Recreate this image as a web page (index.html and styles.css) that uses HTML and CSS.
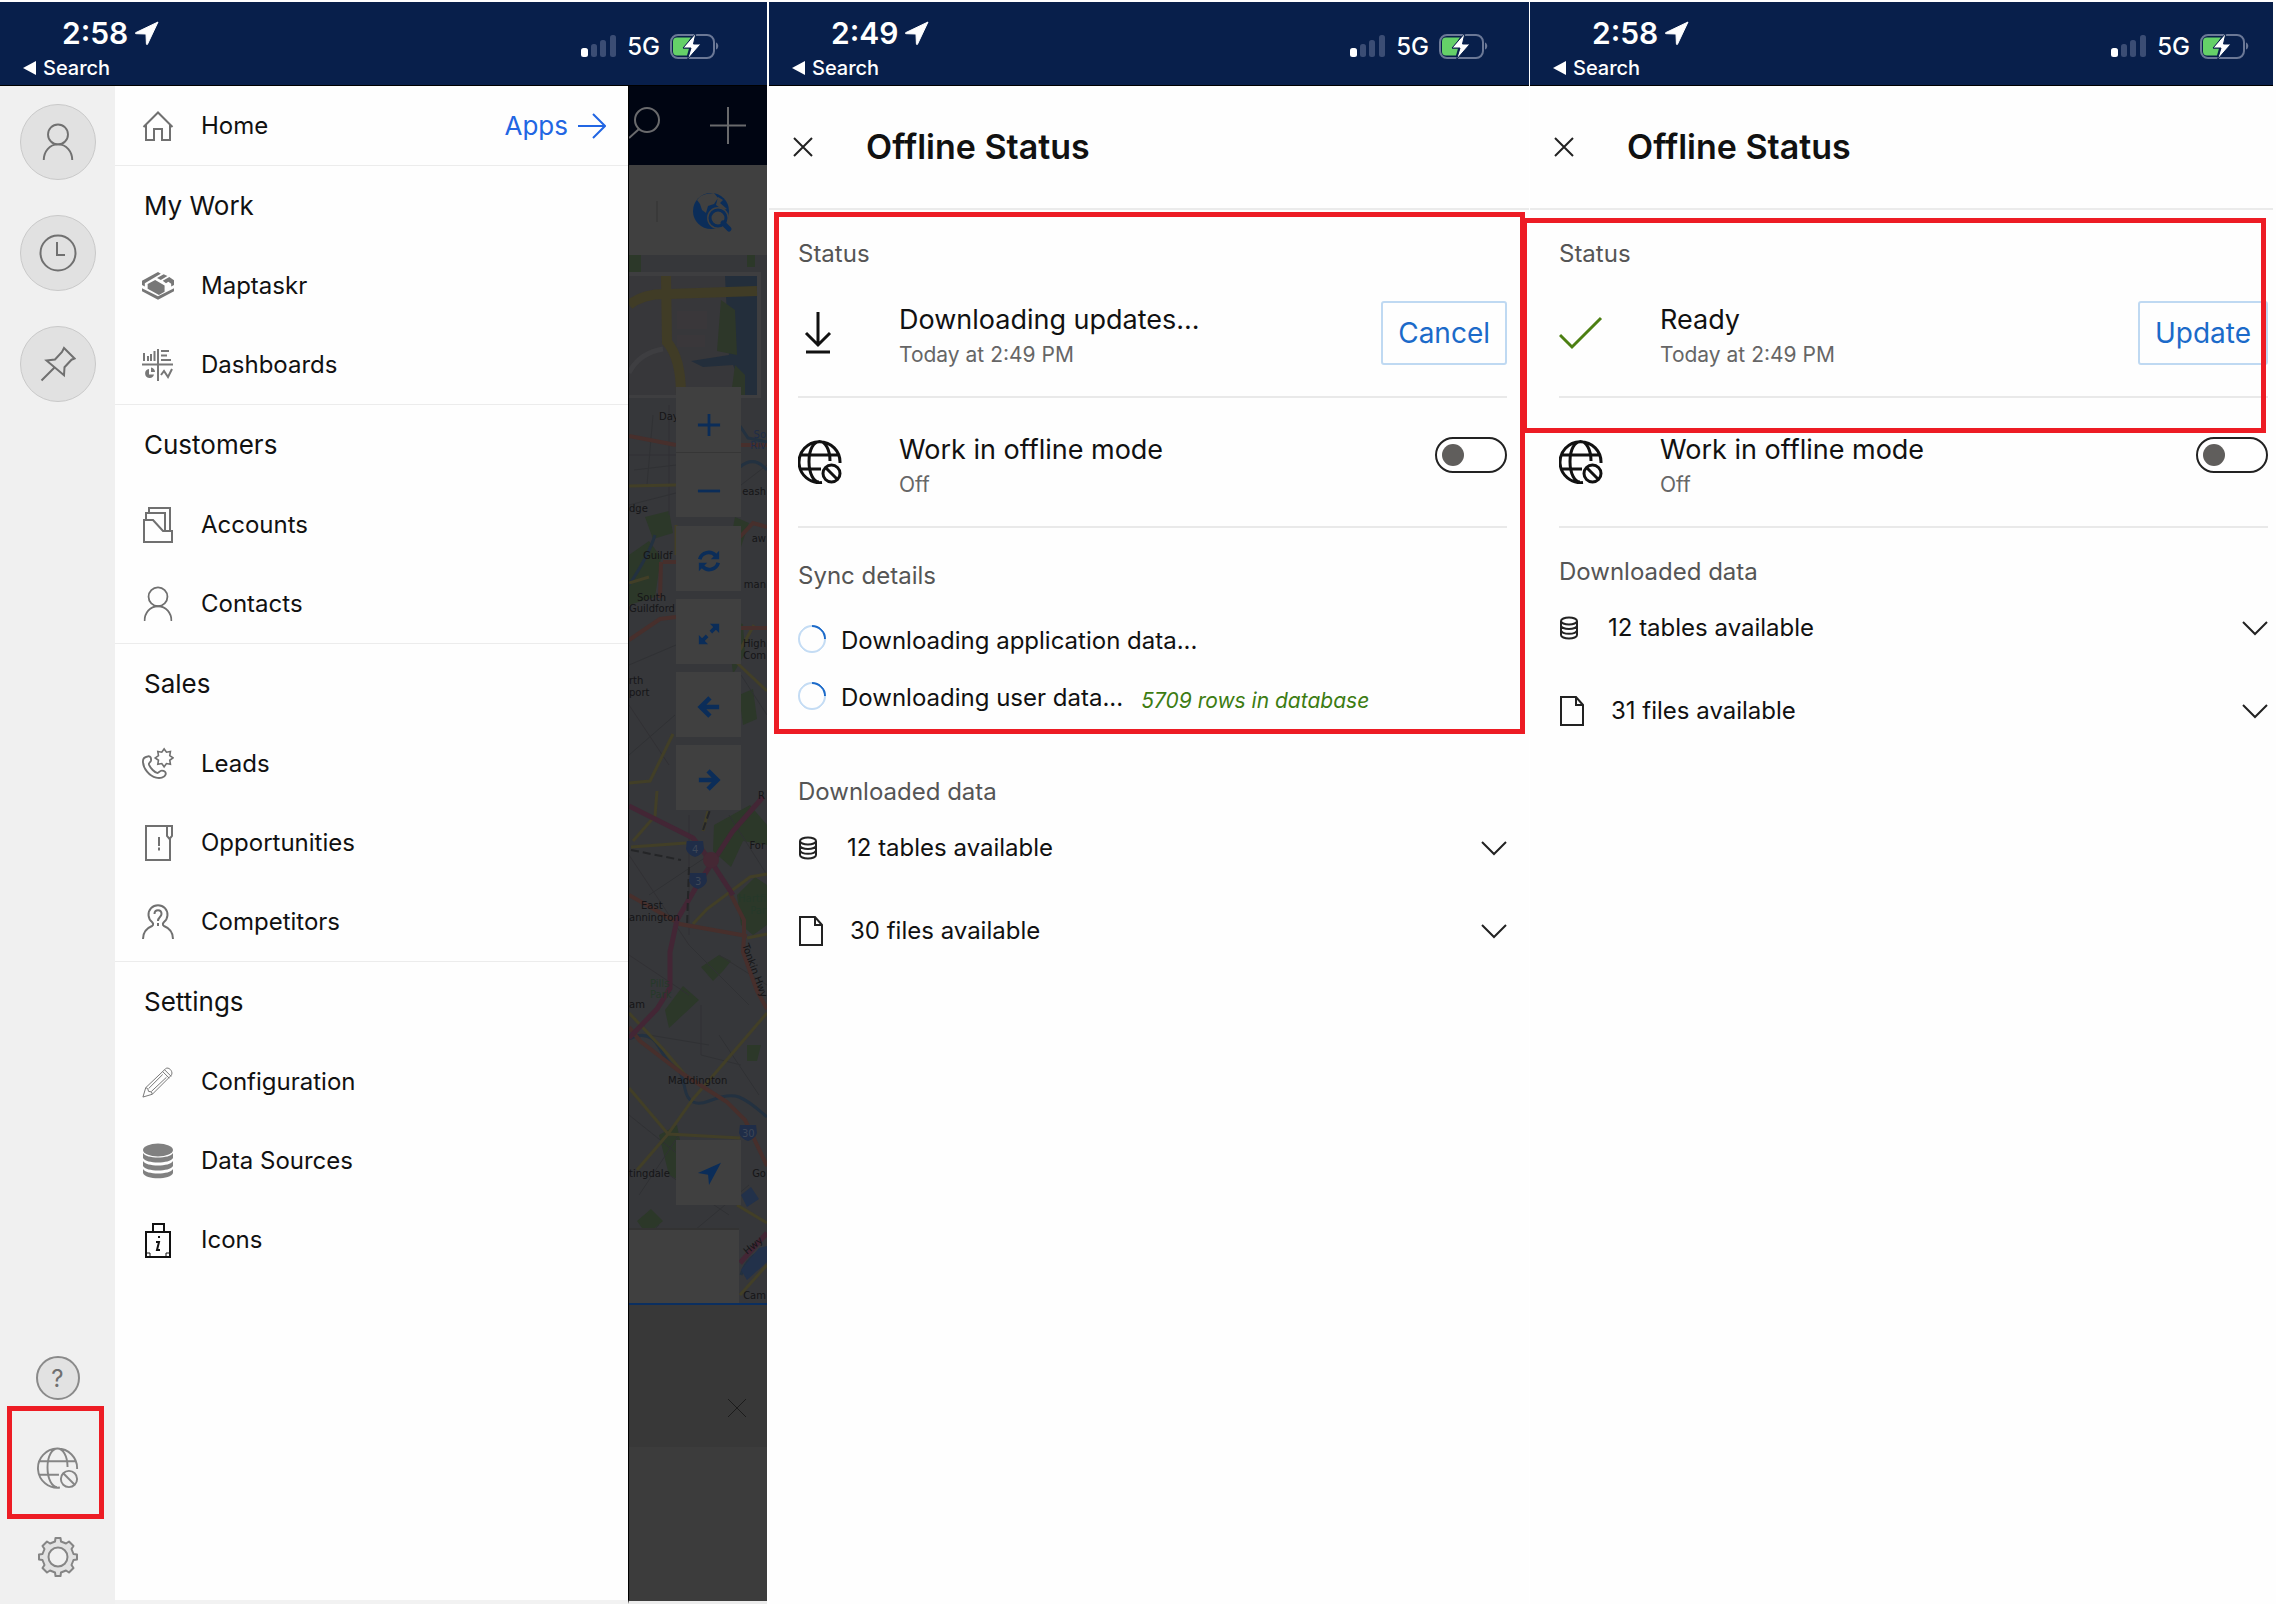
FILE: index.html
```html
<!DOCTYPE html>
<html lang="en">
<head>
<meta charset="utf-8">
<title>Offline Status</title>
<link rel="stylesheet" href="styles.css">
</head>
<body>
<svg class="defs" aria-hidden="true">
  <symbol id="i-nav" viewBox="0 0 24 24"><path d="M23 1 1 11.500a.6.6 0 0 0 .2 1.200L11 13l.4 9.800a.6.6 0 0 0 1.200.2Z" fill="currentColor" stroke="currentColor" stroke-width="1" stroke-linejoin="round"/></symbol>
  <symbol id="i-signal" viewBox="0 0 36 24"><rect x="0" y="14" width="7" height="9" rx="2.500" fill="#fff"/><g fill="#3b4d74"><rect x="10" y="10" width="6" height="13" rx="2.500"/><rect x="19" y="6" width="6" height="17" rx="2.500"/><rect x="29" y="1" width="6" height="22" rx="2.500"/></g></symbol>
  <symbol id="i-battery" viewBox="0 0 50 28"><rect x="1" y="3" width="43" height="23" rx="7" fill="none" stroke="#6b7896" stroke-width="2"/><path d="M46 10.500c3 1 3 6 0 7Z" fill="#6b7896"/><path d="M7 5.500h14l-8 11h6l-2 7H7a4 4 0 0 1-4-4v-10a4 4 0 0 1 4-4Z" fill="#65d168"/><path d="M26 1 13 16h8l-3.500 11.500L31 12h-7.500Z" fill="#fff" stroke="#081f4b" stroke-width="1"/></symbol>
  <symbol id="i-person" viewBox="0 0 32 40"><circle cx="16" cy="12" r="10.500"/><path d="M1 39c0-9 6-16.500 15-16.500S31 30 31 39"/></symbol>
  <symbol id="i-globe" viewBox="0 0 44 44"><path d="M42 23A20.500 20.500 0 1 0 24 42.500M3 15h38M3 29h20M32 21C32 9 27 1.500 21.500 1.500S11 9 11 21.500 16 42 21 42"/><circle cx="33.500" cy="33.500" r="8.500"/><path d="m27.500 27.500 12 12"/></symbol>
  <symbol id="i-close" viewBox="0 0 20 20"><path d="m1 1 18 18M19 1 1 19"/></symbol>
  <symbol id="i-chevron" viewBox="0 0 26 16"><path d="m1 2 12 12L25 2"/></symbol>
  <symbol id="i-db" viewBox="0 0 20 24"><ellipse cx="10" cy="5" rx="8" ry="3.500"/><path d="M2 5v14c0 2 3.500 3.500 8 3.500s8-1.500 8-3.500V5M2 9.500C2 11.500 5.500 13 10 13s8-1.500 8-3.500M2 14.300c0 2 3.500 3.500 8 3.500s8-1.500 8-3.500"/></symbol>
  <symbol id="i-file" viewBox="0 0 26 30"><path d="M2 1h15l7 8v20H2ZM17 1v8h7"/></symbol>
</svg>

<main class="board">
  <section class="phone phone-menu">
    <header class="statusbar">
      <div class="statusbar-left">
        <div class="clock">2:58 <svg class="nav-arrow"><use href="#i-nav"/></svg></div>
        <a class="back" href="#"><span class="triangle"></span>Search</a>
      </div>
      <div class="statusbar-right"><svg class="signal"><use href="#i-signal"/></svg>5G<svg class="battery"><use href="#i-battery"/></svg></div>
    </header>
    <div class="menu-screen">
      <aside class="rail">
        <button class="rail-round" aria-label="Profile"><svg width="32" height="38" class="line"><use href="#i-person"/></svg></button>
        <button class="rail-round" aria-label="Recent"><svg width="38" height="38" viewBox="0 0 38 38" class="line"><circle cx="19" cy="19" r="17.500"/><path d="M18 8v13h8"/></svg></button>
        <button class="rail-round" aria-label="Pinned"><svg width="36" height="36" viewBox="0 0 36 36" class="line"><path d="m24 2 10.500 10.500-3 1.200-7 7.500-.5 8L6.500 14.500l8.500-1 7-7.500ZM14.500 21.500 1.500 34.500"/></svg></button>
        <div class="rail-bottom">
          <button class="help" aria-label="Help">?</button>
          <div class="rail-marked"><button class="rail-plain" aria-label="Offline status"><svg width="42" height="42" class="line"><use href="#i-globe"/></svg></button></div>
          <button class="rail-plain" aria-label="Settings"><svg width="42" height="42" viewBox="0 0 42 42" class="line"><path fill="#e2e2e2" d="M18 5.500 18.500 2h5l.5 3.500 5 2L32 5.500 36.500 10l-2 3 2 5 3.500.500v5l-3.500.500-2 5 2 3L32 36.500l-3-2-5 2-.5 3.500h-5l-.5-3.500-5-2-3 2L5.500 32l2-3-2-5L2 23.500v-5l3.500-.500 2-5-2-3L10 5.500l3 2Z" stroke-linejoin="round"/><circle cx="21" cy="21" r="9.500" fill="#f0f0f0"/></svg></button>
        </div>
      </aside>

      <nav class="menu">
        <div class="menu-top">
          <a class="item" href="#"><svg class="line" viewBox="0 0 32 32"><path d="M1.500 17 16 2.500 30.500 17M4 15v15h8V19h8v11h8V15"/></svg>Home</a>
          <a class="apps" href="#">Apps<svg width="28" height="26" viewBox="0 0 28 26"><path d="M0 13h26M15 1l12 12-12 12" fill="none" stroke="currentColor" stroke-width="2"/></svg></a>
        </div>
        <section class="group">
          <h2>My Work</h2>
          <a class="item" href="#"><svg viewBox="0 0 34 30" fill="#777"><path d="M17 0 0 9.500V14l3 1.500V12L20 2ZM6 13l8-4.500 10 6V21l-6 3.500L6 18ZM16 6.500 23 2.500l4 1.800-7 4.200ZM22 9.500l7-4 5 3.500v5l-3 1.500v-3l-3-2-2.500 1.500ZM0 17.500 17 26l17-8.500v3L17 29.500 0 20.500Z"/></svg>Maptaskr</a>
          <a class="item" href="#"><svg viewBox="0 0 32 32" fill="none" stroke="#777" stroke-width="2"><path d="M0 15.500h31M16 0v32M2 4v8M6 7v5M9 5v7M12.500 2v10M19 2h8M19 6.500h6M19 11h10M19 26l3-4 4 6 4-8"/><path d="M7 20a4.500 4.500 0 1 0 5 5.500H7Z" fill="#777" stroke="none"/><path d="M9 18.500a5 5 0 0 1 4 4.500H9Z" fill="#777" stroke="none"/></svg>Dashboards</a>
        </section>
        <section class="group">
          <h2>Customers</h2>
          <a class="item" href="#"><svg class="line" viewBox="0 0 32 36"><path d="M2 13h9l10 11h9v11H2ZM4 13V6h19v18M7 6V1h21v23"/></svg>Accounts</a>
          <a class="item" href="#"><svg class="line" viewBox="0 0 32 40"><use href="#i-person"/></svg>Contacts</a>
        </section>
        <section class="group">
          <h2>Sales</h2>
          <a class="item" href="#"><svg class="line" viewBox="0 0 34 34"><path d="M6 9c3-1 4 2 3.500 4.500-.5 2-3 2-2 4.500 1.500 3.500 6 8 8.500 8.500 2 .5 2.500-2.500 5-2.500s5 1.500 4 4.500-6 4-10 3C8 30 1 22 1 14c0-2.500 2-4.500 5-5Z"/><path stroke-width="1.700" d="m33 10.500-3.500 2.500.7 4.200-4.200-.7-2.500 3.500-2.500-3.500-4.200.7.7-4.200-3.500-2.500L17.500 8l-.7-4.200 4.200.7L23.500 1 26 4.500l4.200-.7-.7 4.200Z"/></svg>Leads</a>
          <a class="item" href="#"><svg class="line" viewBox="0 0 32 36"><path d="M26 1H4v34h24V14M25 1h5v10l-2.500 3-2.500-3ZM17 12v9M17 22.500v3"/></svg>Opportunities</a>
          <a class="item" href="#"><svg class="line" viewBox="0 0 32 36"><path d="M1 35c0-7 4-11 9-13 2-1 1-3 0-4A9.500 9.500 0 1 1 22 18c-1 1-2 3 0 4 5 2 9 6 9 13M12.500 10c0-5 7-5 7 0 0 3-3.500 3-3.500 7M16 19v3"/></svg>Competitors</a>
        </section>
        <section class="group">
          <h2>Settings</h2>
          <a class="item" href="#"><svg class="line thin" viewBox="0 0 34 34"><path d="M1 33 4 23 25 3c3-3 9 3 6 7L11 30ZM4 23l2 1 1 3 3 .500 1 2.500M22 6l7 7M24 4l7 7M7 24 22 9M10 27 26 12"/></svg>Configuration</a>
          <a class="item" href="#"><svg viewBox="0 0 32 36" fill="#808080"><ellipse cx="16" cy="7" rx="15" ry="6.500"/><path d="M1 10c3 6 27 6 30 0v5c-3 6-27 6-30 0ZM1 18c3 6 27 6 30 0v5c-3 6-27 6-30 0ZM1 26c3 6 27 6 30 0v4c-2 7-28 7-30 0Z"/></svg>Data Sources</a>
          <a class="item" href="#"><svg viewBox="0 0 32 36" fill="none" stroke="#111" stroke-width="2"><path d="M4 10h24v25H4ZM11 10V2h11v8"/><path d="M4 31h4v4M28 31h-4v4" stroke-width="1"/><path d="M14 20h3l-2 8h3M16 15h2" stroke-width="2"/></svg>Icons</a>
        </section>
      </nav>

      <div class="dimmed">
        <div class="dim-header">
          <svg viewBox="0 0 138 79" width="138" height="79" fill="none" stroke="#696a6c" stroke-width="2"><circle cx="18" cy="34" r="12"/><path d="M10 43 0 52M99 21v37M81 39.500h36"/></svg>
        </div>
        <div class="dim-tools">
          <svg viewBox="0 0 138 90" width="138" height="90"><path d="M28 36v21" stroke="#333"/><circle cx="82" cy="46" r="18" fill="#0b2d59"/><path d="M68 35c5-7 12-6 17-7l4 5-4 6-6 2-2 7-4-3-2-6ZM89 32l5 3-3 3 7 6-4 1-7-5Z" fill="#404040"/><circle cx="89" cy="53" r="8" fill="#404040" stroke="#404040" stroke-width="6"/><circle cx="89" cy="53" r="8" fill="none" stroke="#0b2d59" stroke-width="3"/><path d="m94 58 6 6" stroke="#0b2d59" stroke-width="5" stroke-linecap="round"/></svg>
        </div>
        <div class="map">
          <svg class="map-art" viewBox="0 0 138 1048" preserveAspectRatio="xMinYMin slice">
            <rect width="138" height="1048" fill="#36373a"/>
            <g fill="#2c3829"><path d="M0 0h12v17H0ZM118 0h8v12h-8ZM0 300l20-14 12 16-6 40-26 8ZM106 262l14 6-12 36h-10ZM16 262l24-6 4 22-20 6ZM98 365l16 4 2 30-12 20ZM85 570l36-20 17 20v20l-24-4-12 26-18-16ZM108 640l18-18 12 8v40l-14 10-12-10ZM72 712l18-12 12 6-8 10-10 10ZM36 755l18-24 16 14-30 28ZM110 440l14-6 4 30-14 6ZM8 966l14-12 12 12-16 14ZM30 880l18-10 12 60-20-10ZM118 790h14l-4 16h-10Z"/></g>
            <g fill="none" stroke="#303134" stroke-width="1"><path d="M0 200h47M5 215l42-5M24 160l-6 70M0 250l47-12M40 150v110M0 410l47-20M0 450l40 60M0 500l46-40M60 560v120M0 600l60 90M20 640l60-40M60 690l60 60M0 700l60 40M72 750v50l40 10M90 700l48 30M0 860l50 40M10 940l40-60M40 920l60 40M60 980l60-50M90 780l40 60M20 780l60 10M0 1000l30-30M100 560l38 60M112 420l26 40M112 230l26-20"/></g>
            <g fill="none" stroke="#233140" stroke-width="3"><path d="M111 171l8 12 19 4M111 212q14-12 27 3M0 330q20-30 26-50M0 784q20-10 30 8t16 20 10 22 24 12 30-4 28 20M112 1020q6-20 26-26"/></g>
            <path d="M112 1015l18-22 8-2v16l-20 18ZM112 940l10-8 8 12-12 8Z" fill="#22314a"/>
            <g fill="none" stroke="#423f27" stroke-width="3"><path d="M0 231l47-1M47 300V270M0 328l20-6M0 528l21-2 23-47M28 536l-2 25-22 25M74 576l5-20M2 592l55-4M64 669l14-15 43-32 17-3M138 758l-37 43-37 43-25 35-31 36M0 833l39 46 72 4M0 758l34 36 24 28M106 406l32 30M111 395l14-25M108 950l30 18M111 1040l27-30M118 683l20-4"/></g>
            <g fill="none" stroke="#472f2c" stroke-width="4"><path d="M0 181l47 9M111 190h27M111 282l13-14 14 4M0 385l31-21 16-2M32 307l-1 36M34 307h13M112 373h26M0 640l51 29 67 12M101 638l14 27v18l-1 14 14 39 10 18M0 772l11 14 43 33 44 28 18 18 22 46"/></g>
            <g fill="none" stroke="#432635" stroke-width="5"><path d="M0 551l64 32 19 25 21 32M83 608l21-32 30-34M83 608l-14 21-21 36-7 32v36l-13 21-28 29M111 1008l27-30"/></g>
            <circle cx="82" cy="605" r="8" fill="#452834"/>
            <path d="M2 595l50 10M74 575l14-40M60 612l-2 60M86 420v60M94 370v16" stroke="#242527" stroke-width="2" stroke-dasharray="8 4" fill="none"/>
            <g fill="#1f2d48"><path d="M58 586h16l1 8q-2 6-9 8-7-2-9-8ZM61 618h16l1 8q-2 6-9 8-7-2-9-8ZM111 870h16l1 8q-2 6-9 8-7-2-9-8Z"/></g>
            <g class="map-text">
              <text x="30" y="165">Day</text><text x="0" y="257">dge</text><text x="14" y="304">Guildf</text><text x="8" y="346">South</text><text x="0" y="357">Guildford</text>
              <text x="0" y="429">rth</text><text x="0" y="441">port</text>
              <g class="map-text-end"><text x="137" y="392">High</text><text x="137" y="404">Com</text><text x="137" y="240">eash</text><text x="137" y="333">man</text><text x="137" y="287">aw</text><text x="136" y="594">For</text><text x="137" y="922">Go</text><text x="137" y="1044">Cam</text></g>
              <text x="12" y="654">East</text><text x="0" y="666">annington</text><text x="0" y="753">am</text><text x="39" y="829">Maddington</text><text x="0" y="922">tingdale</text>
              <text transform="translate(113 690) rotate(70)">Tonkin Hwy</text><text transform="translate(118 1000) rotate(-40)">Hwy</text><text x="129" y="544">R</text>
              <g class="map-text-end" fill="#26392a"><text x="137" y="647">Hartfi</text><text x="137" y="659">Par</text></g>
              <g fill="#26392a"><text x="21" y="732">Pills</text><text x="21" y="743">Park</text></g>
              <g class="map-text-end" fill="#1f2d48"><text x="137" y="183">So</text><text x="137" y="194">Riv</text></g>
              <g fill="#3d4656"><text x="63" y="598">4</text><text x="66" y="630">3</text><text x="113" y="882">30</text></g>
            </g>
            <path d="M0 17h132v126H0Z" fill="#3e3e40"/>
            <g class="map-inset"><path d="M0 21h128v119H0Z" fill="#37373a"/><path d="M96 21h32v119h-12l-12-30-30 2-12-6 38-6Z" fill="#232e3b"/><path d="M92 45l14 10 2 45-20-4ZM106 110l10 10v20h-14Z" fill="#2d3729"/><path d="M48 56h30v18H48ZM48 80h28v12H48Z" fill="#3a373a"/><path d="M0 118q10-20 34-24" stroke="#3e3e41" stroke-width="5" fill="none"/><path d="M0 50q14-12 40-11l88-3M37 21l1 66q14 16 14 53" stroke="#403c26" stroke-width="10" fill="none"/></g>
          </svg>
          <div class="zoom-controls"><button aria-label="Zoom in"><svg viewBox="0 0 26 26"><path d="M13 1v24M1 13h24" stroke-width="3"/></svg></button><button aria-label="Zoom out"><svg viewBox="0 0 26 26"><path d="M1 13h24" stroke-width="3"/></svg></button></div>
          <div class="map-controls">
            <button aria-label="Refresh"><svg viewBox="0 0 26 26"><path d="M3 11a10 10 0 0 1 17-4M23 15a10 10 0 0 1-17 4" stroke-width="4"/><path d="M24 2v9h-9ZM2 24v-9h9Z" fill="#0b2d59" stroke="none"/></svg></button>
            <button aria-label="Expand"><svg viewBox="0 0 26 26"><path d="m15 11 6-6M11 15l-6 6" stroke-width="4"/><path d="M14 2h10v10ZM2 14v10h10Z" fill="#0b2d59" stroke="none"/></svg></button>
            <button aria-label="Previous"><svg viewBox="0 0 26 26"><path d="M24 13H5M14 3 4 13l10 10" stroke-width="5"/></svg></button>
            <button aria-label="Next"><svg viewBox="0 0 26 26"><path d="M2 13h19M12 3l10 10-10 10" stroke-width="5"/></svg></button>
          </div>
          <button class="locate" aria-label="My location"><svg viewBox="0 0 26 26"><path d="M26 2 1 13l11 2 1 11Z" fill="#0b2d59"/></svg></button>
          <div class="map-card"></div>
        </div>
        <div class="dim-sheet"><button aria-label="Dismiss"><svg width="20" height="20"><use href="#i-close"/></svg></button></div>
        <div class="dim-rest"></div>
      </div>
    </div>
  </section>

  <section class="phone phone-sync">
    <header class="statusbar">
      <div class="statusbar-left">
        <div class="clock">2:49 <svg class="nav-arrow"><use href="#i-nav"/></svg></div>
        <a class="back" href="#"><span class="triangle"></span>Search</a>
      </div>
      <div class="statusbar-right"><svg class="signal"><use href="#i-signal"/></svg>5G<svg class="battery"><use href="#i-battery"/></svg></div>
    </header>
    <div class="titlebar"><button aria-label="Close"><svg width="20" height="20"><use href="#i-close"/></svg></button><h1>Offline Status</h1></div>
    <div class="marked marked-sync">
      <section class="block">
        <h3>Status</h3>
        <div class="row">
          <svg class="row-icon" viewBox="0 0 44 64"><path d="M20 11v33M8 32l12 12 12-12M8 51h24"/></svg>
          <div class="row-text"><p class="row-title">Downloading updates...</p><p class="row-sub">Today at 2:49 PM</p></div>
          <button class="action">Cancel</button>
        </div>
        <div class="row">
          <svg class="row-icon"><use href="#i-globe" width="44" height="44" y="9"/></svg>
          <div class="row-text"><label class="row-title" for="offline-a">Work in offline mode</label><p class="row-sub">Off</p></div>
          <input class="switch" type="checkbox" role="switch" id="offline-a">
        </div>
      </section>
      <section class="block sync">
        <h3>Sync details</h3>
        <p class="sync-row"><span class="spinner"></span>Downloading application data...</p>
        <p class="sync-row"><span class="spinner"></span>Downloading user data... <em>5709 rows in database</em></p>
      </section>
    </div>
    <section class="block downloaded">
      <h3>Downloaded data</h3>
      <button class="expander"><svg class="db" width="20" height="24"><use href="#i-db"/></svg>12 tables available<svg class="chevron"><use href="#i-chevron"/></svg></button>
      <button class="expander"><svg class="file" width="26" height="30"><use href="#i-file"/></svg>30 files available<svg class="chevron"><use href="#i-chevron"/></svg></button>
    </section>
  </section>

  <section class="phone phone-ready">
    <header class="statusbar">
      <div class="statusbar-left">
        <div class="clock">2:58 <svg class="nav-arrow"><use href="#i-nav"/></svg></div>
        <a class="back" href="#"><span class="triangle"></span>Search</a>
      </div>
      <div class="statusbar-right"><svg class="signal"><use href="#i-signal"/></svg>5G<svg class="battery"><use href="#i-battery"/></svg></div>
    </header>
    <div class="titlebar"><button aria-label="Close"><svg width="20" height="20"><use href="#i-close"/></svg></button><h1>Offline Status</h1></div>
    <div class="marked marked-ready">
      <section class="block">
        <h3>Status</h3>
        <div class="row">
          <svg class="row-icon check" viewBox="0 0 44 64"><path d="m1 34 12 12 29-29"/></svg>
          <div class="row-text"><p class="row-title">Ready</p><p class="row-sub">Today at 2:49 PM</p></div>
          <button class="action">Update</button>
        </div>
      </section>
    </div>
    <section class="block continued">
      <div class="row">
        <svg class="row-icon"><use href="#i-globe" width="44" height="44" y="9"/></svg>
        <div class="row-text"><label class="row-title" for="offline-b">Work in offline mode</label><p class="row-sub">Off</p></div>
        <input class="switch" type="checkbox" role="switch" id="offline-b">
      </div>
    </section>
    <section class="block downloaded">
      <h3>Downloaded data</h3>
      <button class="expander"><svg class="db" width="20" height="24"><use href="#i-db"/></svg>12 tables available<svg class="chevron"><use href="#i-chevron"/></svg></button>
      <button class="expander"><svg class="file" width="26" height="30"><use href="#i-file"/></svg>31 files available<svg class="chevron"><use href="#i-chevron"/></svg></button>
    </section>
  </section>
</main>
</body>
</html>
```

FILE: styles.css
```css
* { box-sizing: border-box; }

body {
  margin: 0;
  background: #fefefe;
  color: #111;
  font-family: Inter, "Liberation Sans", sans-serif;
  font-size: 24px;
}

h1, h2, h3, p { margin: 0; font-weight: 400; }
a { color: inherit; text-decoration: none; }
button { margin: 0; padding: 0; border: 0; background: none; color: inherit; font: inherit; }
svg { display: block; flex: none; }
.defs { position: absolute; width: 0; height: 0; }

.board {
  display: grid;
  grid-template-columns: 767fr 762fr 744fr;
  min-height: 100vh;
  padding: 2px 3px 0 0;
}

.phone { display: flex; flex-direction: column; min-width: 0; }
.phone-sync { border-left: 2px solid #fff; }
.phone-ready { border-left: 1px solid #fff; }

/* iOS status bar */
.statusbar {
  display: flex;
  justify-content: space-between;
  height: 84px;
  padding: 14px 47px 0 23px;
  border-bottom: 1px solid #000;
  background: #081f4b;
  color: #fff;
}
.phone-sync .statusbar { padding-right: 40px; }
.phone-ready .statusbar { padding-right: 23px; }
.clock {
  display: flex;
  align-items: center;
  gap: 7px;
  height: 34px;
  padding-left: 39px;
  font-size: 30px;
  font-weight: 600;
}
.nav-arrow { width: 24px; height: 24px; }
.back { display: flex; align-items: center; gap: 7px; height: 36px; font-size: 20px; font-weight: 500; }
.triangle {
  border: 7px solid transparent;
  border-right: 13px solid #fff;
  border-left: 0;
}
.statusbar-right { display: flex; align-items: center; gap: 10px; height: 60px; font-weight: 500; }
.signal { width: 36px; height: 24px; }
.battery { width: 50px; height: 28px; }

/* Menu screen */
.menu-screen { flex: 1; display: grid; grid-template-columns: 115px 1fr 138px; }

.rail {
  display: flex;
  flex-direction: column;
  align-items: center;
  gap: 35px;
  padding: 18px 0 26px;
  background: #f0f0f0;
  color: #707070;
}
.line { fill: none; stroke: #707070; stroke-width: 2; }
.thin { stroke-width: 1; }
.rail-round {
  display: grid;
  place-items: center;
  width: 76px;
  height: 76px;
  border: 1px solid #c9c9c9;
  border-radius: 50%;
  background: #e1e1e1;
}
.rail-bottom { display: flex; flex-direction: column; align-items: center; margin-top: auto; }
.rail .help {
  width: 44px;
  height: 44px;
  border: 2px solid #8a8a8a;
  border-radius: 50%;
  background: #e2e2e2;
}
.rail-marked { position: relative; display: grid; padding: 47px 0; }
.rail-marked::after {
  content: "";
  position: absolute;
  inset: 6px -25px 17px -30px;
  border: 5px solid #ed1c24;
  pointer-events: none;
}
.rail-bottom .line { stroke: #858585; }

.menu { border-right: 1px solid #000; border-bottom: 4px solid #f2f2f2; }
.menu-top, .group { border-bottom: 1px solid #ececec; }
.group:last-child { border-bottom: 0; }
.menu-top { display: flex; justify-content: space-between; align-items: center; height: 80px; padding-right: 22px; }
.apps { display: flex; align-items: center; gap: 10px; color: #2266e3; font-size: 26px; }
.group h2 { padding-left: 29px; font-size: 26px; line-height: 80px; }
.item { display: flex; align-items: center; gap: 27px; height: 79px; padding-left: 27px; }
.item svg { width: 32px; height: 36px; }

/* Dimmed app behind the menu */
.dimmed { display: flex; flex-direction: column; border-bottom: 3px solid #ececec; }
.dim-header { height: 79px; background: #000512; }
.dim-tools { height: 90px; background: #404040; }
.map { position: relative; flex: 1; overflow: hidden; }
.map-art { position: absolute; width: 100%; height: 100%; }
.map-text { fill: #151517; font-family: "DejaVu Sans", sans-serif; font-size: 10px; }
.map-text-end { text-anchor: end; }
.map button { display: grid; place-items: center; width: 65px; height: 65px; background: #404040; }
.map button svg { width: 24px; height: 24px; fill: none; stroke: #0b2d59; }
.map .locate svg { stroke: none; }
.zoom-controls { position: absolute; top: 132px; right: 26px; }
.zoom-controls button { padding-top: 11px; }
.zoom-controls button + button { border-top: 1px solid #363636; }
.map-controls { position: absolute; top: 271px; right: 26px; display: grid; gap: 8px; }
.map-controls button { padding-top: 4px; }
.map .locate { position: absolute; bottom: 98px; right: 26px; }
.map-card { position: absolute; left: 0; right: 28px; bottom: 0; height: 75px; border-top: 2px solid #333; background: #404040; }
.dim-sheet {
  display: flex;
  align-items: flex-start;
  justify-content: flex-end;
  height: 144px;
  padding: 93px 20px 0 0;
  border-top: 2px solid #0b2f60;
  background: #383838;
}
.dim-sheet svg { fill: none; stroke: #1c1c1c; stroke-width: 1; }
.dim-rest { height: 154px; background: #3c3c3c; }

/* Offline status screens */
.titlebar {
  display: flex;
  align-items: center;
  gap: 53px;
  height: 124px;
  padding-left: 24px;
  border-bottom: 2px solid #ebebeb;
}
.titlebar svg { fill: none; stroke: #222; stroke-width: 2; }
.titlebar h1 { font-size: 34px; font-weight: 600; line-height: 40px; }

.marked { position: relative; }
.marked::after { content: ""; position: absolute; border: 5px solid #ed1c24; pointer-events: none; }
.marked-sync { padding-bottom: 22px; }
.marked-sync::after { inset: 2px 4px 14px 5px; }
.marked-ready::after { inset: 8px 7px -35px -8px; }

.block { padding: 30px 22px 0 29px; }
.phone-ready .block { padding-right: 5px; }
.phone-ready .continued { padding-top: 0; }
.sync { padding-top: 34px; }
.block h3 { color: #555; font-size: 24px; line-height: 28px; }

.row {
  display: flex;
  align-items: flex-start;
  padding: 33px 0 25px;
  border-bottom: 2px solid #e9e9e9;
}
.row-icon { width: 44px; height: 64px; margin-right: 57px; fill: none; stroke: #111; stroke-width: 3; }
.check { stroke: #4c7f12; }
.row-text { flex: 1; }
.row-title { display: block; font-size: 27px; line-height: 38px; }
.row-sub { color: #666; font-size: 21px; line-height: 32px; }
.action {
  height: 64px;
  padding: 0 15px;
  border: 2px solid #bfd9f2;
  border-radius: 3px;
  color: #1b6ac9;
  font-size: 28px;
}
.switch {
  appearance: none;
  width: 72px;
  height: 36px;
  margin: 6px 0 0;
  padding: 5px;
  border: 2px solid #222;
  border-radius: 18px;
  background: #fff;
}
.switch::before { content: ""; display: block; width: 22px; height: 22px; border-radius: 50%; background: #605e5c; }

.sync h3 { margin-bottom: 22px; }
.sync-row { display: flex; align-items: center; height: 57px; }
.spinner {
  width: 28px;
  height: 28px;
  margin: 0 15px 4px 0;
  border: 2px solid #c4dcf4;
  border-top-color: #1b6ac9;
  border-radius: 50%;
  transform: rotate(45deg);
}
.sync-row em { padding: 5px 0 0 18px; color: #3c7c12; font-size: 21px; }

.downloaded { display: flex; flex-direction: column; }
.expander { display: flex; align-items: center; height: 83px; text-align: left; }
.expander svg { fill: none; stroke: #222; stroke-width: 2; }
.db { margin-right: 29px; }
.file { margin-right: 26px; }
.expander .chevron { width: 26px; height: 16px; margin-left: auto; }
```
